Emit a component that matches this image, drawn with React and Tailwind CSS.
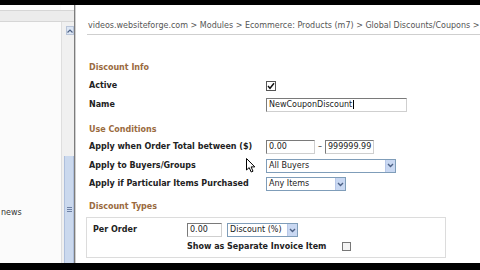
import React from "react";

const F = { fontFamily: '"DejaVu Sans", Verdana, sans-serif' };

function SelectBox({ w, label }) {
  return (
    <div className={`flex h-[14px] items-stretch border border-[#7f9db9] bg-white`} style={{ width: w }}>
      <div className="flex flex-1 items-center pl-[2px] text-[8px] leading-none text-[#222]">{label}</div>
      <div className="flex w-[10px] items-center justify-center border-l border-[#b8c8e8] bg-[#c9d8f2]">
        <svg width="7" height="5" viewBox="0 0 7 5">
          <path d="M1 1 L3.5 3.5 L6 1" fill="none" stroke="#4d6185" strokeWidth="1.4" />
        </svg>
      </div>
    </div>
  );
}

function TextBox({ w, value }) {
  return (
    <div
      className="flex h-[14px] items-center border border-[#7a7a7a] border-b-[#cfcfcf] border-r-[#cfcfcf] bg-white pl-[2px] text-[8px] leading-none text-[#222]"
      style={{ width: w }}
    >
      {value}
    </div>
  );
}

function Label({ children }) {
  return <div className="w-[177px] shrink-0 text-[8px] font-bold leading-none text-[#222]">{children}</div>;
}

function Heading({ children, className }) {
  return (
    <div className={`flex h-[12px] items-center text-[8px] font-bold leading-none text-[#9a6a40] ${className}`}>
      {children}
    </div>
  );
}

export default function App() {
  return (
    <div className="relative flex h-[270px] w-[480px] flex-col overflow-hidden bg-black" style={F}>
      <div className="h-[5px] shrink-0 bg-black" />
      <div className="flex h-[258px] shrink-0 bg-white">
        {/* left panel */}
        <div className="flex w-[61px] shrink-0 flex-col bg-[#fbfbfb]">
          <div className="mt-[5px] h-[12px] border-y border-[#d6d6d6] bg-[#ececec]" />
          <div className="mt-[187px] pl-[1px] text-[8px] leading-none text-[#333]">news</div>
        </div>
        {/* scrollbar */}
        <div className="flex w-[13px] shrink-0 flex-col bg-white">
          <div className="mt-[5px] h-[12px] border-y border-[#d6d6d6] bg-[#ececec]" />
          <div className="flex flex-1 flex-col border-l border-[#dedede] bg-[#f0f0f0]">
            <div className="ml-[4px] mt-[4px] flex h-[9px] w-[8px] items-center justify-center border border-[#b8c4d8] bg-[#dce6f4]">
              <svg width="6" height="4" viewBox="0 0 6 4">
                <path d="M0.5 3.5 L3 1 L5.5 3.5" fill="none" stroke="#4d6185" strokeWidth="1.2" />
              </svg>
            </div>
            <div className="ml-[2px] mt-[121px] flex flex-1 flex-col items-center justify-center border-x border-[#aebfdc] bg-[#cbd9ee]">
              <div className="flex flex-col gap-[1px]">
                <div className="h-[1px] w-[5px] bg-[#6d80a4]" />
                <div className="h-[1px] w-[5px] bg-[#6d80a4]" />
                <div className="h-[1px] w-[5px] bg-[#6d80a4]" />
              </div>
            </div>
          </div>
        </div>
        <div className="w-[1px] shrink-0 bg-[#7c7c7c]" />
        <div className="w-[1px] shrink-0 bg-[#d0d0d0]" />
        {/* main */}
        <div className="flex flex-1 flex-col bg-white pl-[11px]">
          <div className="flex h-[30px] shrink-0 items-end border-b border-[#cfcfcf] pb-[2px] pl-[1px]">
            <div className="whitespace-nowrap text-[8px] leading-[12px] text-[#555]">
              videos.websiteforge.com &gt; Modules &gt; Ecommerce: Products (m7) &gt; Global Discounts/Coupons &gt;
            </div>
          </div>
          <div className="flex flex-col pl-[2px]">
            <Heading className="mt-[27px]">Discount Info</Heading>
            <div className="mt-[3px] flex h-[18px] items-center">
              <Label>Active</Label>
              <div className="flex h-[10px] w-[10px] items-center justify-center border border-[#555] bg-white">
                <svg width="8" height="8" viewBox="0 0 8 8">
                  <path d="M1 4 L3 6.3 L7 1.2" fill="none" stroke="#111" strokeWidth="1.4" />
                </svg>
              </div>
            </div>
            <div className="flex h-[19px] items-center">
              <Label>Name</Label>
              <TextBox w="141px" value={<span>NewCouponDiscount<span className="ml-[1px] inline-block h-[9px] w-[1px] bg-black align-middle" /></span>} />
            </div>
            <Heading className="mt-[10px]">Use Conditions</Heading>
            <div className="mt-[2px] flex h-[18px] items-center">
              <Label>Apply when Order Total between ($)</Label>
              <TextBox w="49px" value="0.00" />
              <div className="mx-[3px] text-[8px] leading-none text-[#222]">–</div>
              <TextBox w="49px" value="999999.99" />
            </div>
            <div className="flex h-[19px] items-center">
              <Label>Apply to Buyers/Groups</Label>
              <SelectBox w="130px" label="All Buyers" />
            </div>
            <div className="flex h-[18px] items-center">
              <Label>Apply if Particular Items Purchased</Label>
              <SelectBox w="80px" label="Any Items" />
            </div>
            <Heading className="mt-[8px]">Discount Types</Heading>
          </div>
          <div className="mt-[4px] flex w-[360px] -ml-[1px] flex-col border border-[#dcdcdc] pb-[6px]">
            <div className="flex items-start pl-[6px] pt-[5px]">
              <div className="w-[94px] shrink-0 pt-[3px] text-[8px] font-bold leading-none text-[#222]">Per Order</div>
              <div className="flex flex-col">
                <div className="flex items-center">
                  <TextBox w="35px" value="0.00" />
                  <div className="ml-[5px]">
                    <SelectBox w="71px" label="Discount (%)" />
                  </div>
                </div>
                <div className="mt-[5px] flex items-center">
                  <div className="w-[155px] text-[8px] font-bold leading-none text-[#222]">Show as Separate Invoice Item</div>
                  <div className="h-[9px] w-[9px] border border-[#777] bg-[#f4f4f4]" />
                </div>
              </div>
            </div>
          </div>
        </div>
      </div>
      <div className="flex-1 bg-black" />
      {/* mouse cursor overlay */}
      <svg className="absolute left-[246px] top-[158px]" width="10" height="15" viewBox="0 0 10 15">
        <path d="M0.5 0.5 L0.5 12 L3.2 9.6 L5.2 14 L7 13.2 L5.1 8.9 L8.8 8.9 Z" fill="#fff" stroke="#000" strokeWidth="1" />
      </svg>
    </div>
  );
}
